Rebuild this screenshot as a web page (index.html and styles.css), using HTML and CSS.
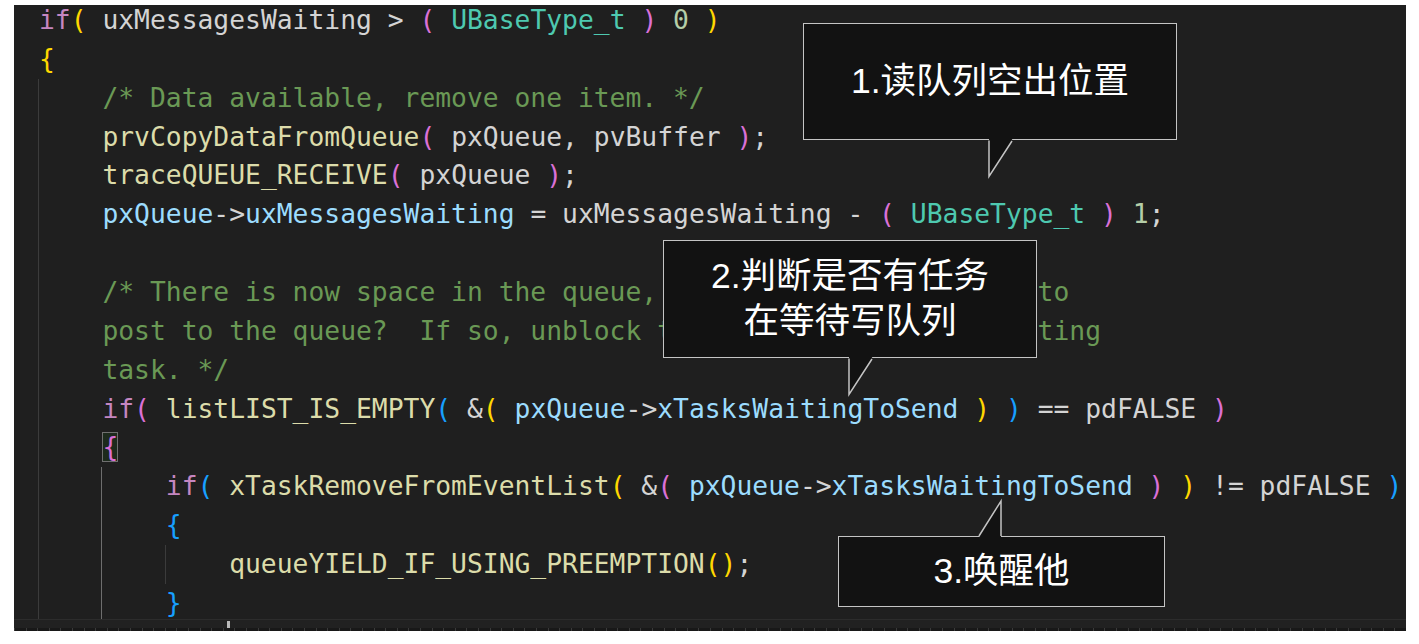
FILE: index.html
```html
<!DOCTYPE html>
<html lang="zh-CN">
<head>
<meta charset="utf-8">
<title>queue receive</title>
<link rel="stylesheet" href="styles.css">
</head>
<body>
<div class="stage">
  <div class="editor">
    <div class="code">
      <div class="lines">
        <div class="ln"><span class="k">if</span><span class="b1">(</span> uxMessagesWaiting &gt; <span class="b2">(</span> <span class="t">UBaseType_t</span> <span class="b2">)</span> <span class="n">0</span> <span class="b1">)</span></div>
        <div class="ln"><span class="b1">{</span></div>
        <div class="ln"><span class="ind"></span><span class="c">/* Data available, remove one item. */</span></div>
        <div class="ln"><span class="ind"></span><span class="f">prvCopyDataFromQueue</span><span class="b2">(</span> pxQueue, pvBuffer <span class="b2">)</span>;</div>
        <div class="ln"><span class="ind"></span><span class="f">traceQUEUE_RECEIVE</span><span class="b2">(</span> pxQueue <span class="b2">)</span>;</div>
        <div class="ln"><span class="ind"></span><span class="v">pxQueue</span>-&gt;<span class="v">uxMessagesWaiting</span> = uxMessagesWaiting - <span class="b2">(</span> <span class="t">UBaseType_t</span> <span class="b2">)</span> <span class="n">1</span>;</div>
        <div class="ln"><span class="ind"></span></div>
        <div class="ln"><span class="ind"></span><span class="c">/* There is now space in the queue, were any tasks waiting to</span></div>
        <div class="ln"><span class="ind"></span><span class="c">post to the queue?  If so, unblock the highest priority waiting</span></div>
        <div class="ln"><span class="ind"></span><span class="c">task. */</span></div>
        <div class="ln"><span class="ind"></span><span class="k">if</span><span class="b2">(</span> <span class="f">listLIST_IS_EMPTY</span><span class="b3">(</span> &amp;<span class="b1">(</span> <span class="v">pxQueue</span>-&gt;<span class="v">xTasksWaitingToSend</span> <span class="b1">)</span> <span class="b3">)</span> == pdFALSE <span class="b2">)</span></div>
        <div class="ln"><span class="ind"></span><span class="b2 match">{</span></div>
        <div class="ln"><span class="ind"></span><span class="ind active"></span><span class="k">if</span><span class="b3">(</span> <span class="f">xTaskRemoveFromEventList</span><span class="b1">(</span> &amp;<span class="b2">(</span> <span class="v">pxQueue</span>-&gt;<span class="v">xTasksWaitingToSend</span> <span class="b2">)</span> <span class="b1">)</span> != pdFALSE <span class="b3">)</span></div>
        <div class="ln"><span class="ind"></span><span class="ind active"></span><span class="b3">{</span></div>
        <div class="ln"><span class="ind"></span><span class="ind active"></span><span class="ind"></span><span class="f">queueYIELD_IF_USING_PREEMPTION</span><span class="b1">()</span>;</div>
        <div class="ln"><span class="ind"></span><span class="ind active"></span><span class="b3">}</span></div>
        <div class="ln"><span class="ind"></span><span class="ind active"></span></div>
      </div>
    </div>
    <div class="hscroll"><span class="caret"></span></div>
    <div class="ruler"></div>
  </div>

  <div class="callout co1">
    <div class="co-text">1.读队列空出位置</div>
    <svg class="tail tail-down" width="32" height="42" viewBox="0 0 32 42"><polygon points="5,0 5,38.5 29,0" fill="#121212"/><polyline points="5,2.5 5,38.5 28,3" fill="none" stroke="#c4c4c4" stroke-width="1.5"/></svg>
  </div>
  <div class="callout co2">
    <div class="co-text">2.判断是否有任务<br>在等待写队列</div>
    <svg class="tail tail-down" width="32" height="42" viewBox="0 0 32 42"><polygon points="5,0 5,38.5 29,0" fill="#121212"/><polyline points="5,2.5 5,38.5 28,3" fill="none" stroke="#c4c4c4" stroke-width="1.5"/></svg>
  </div>
  <div class="callout co3">
    <div class="co-text">3.唤醒他</div>
    <svg class="tail tail-up" width="32" height="40" viewBox="0 0 32 40"><polygon points="3,40 26,2 26,40" fill="#121212"/><polyline points="4,37 26,2 26,37" fill="none" stroke="#c4c4c4" stroke-width="1.5"/></svg>
  </div>
</div>
</body>
</html>
```
FILE: styles.css
```css
html, body {
  margin: 0;
  padding: 0;
  background: #ffffff;
}

.stage {
  position: relative;
  width: 1419px;
  height: 644px;
  overflow: hidden;
}

.editor {
  margin: 5px 0 0 14px;
  width: 1392px;
  height: 626px;
  background: #1f1f1f;
  display: flex;
  flex-direction: column;
}

.code {
  flex: 1;
  overflow: hidden;
  padding-left: 25px;
}

.lines {
  margin-top: -4px;
  font-family: "DejaVu Sans Mono", "Liberation Mono", monospace;
  font-size: 26.33px;
  line-height: 38.87px;
  color: #d4d4d4;
}

.ln {
  height: 38.87px;
  white-space: pre;
}

.ind {
  display: inline-block;
  width: 4ch;
  height: 38.87px;
  vertical-align: top;
  box-sizing: border-box;
  border-left: 1px solid #3b3b3b;
  margin-left: -1px;
  margin-right: 1px;
}
.ind.active { border-left-color: #6e6e6e; }

.k { color: #c586c0; }
.f { color: #dcdcaa; }
.v { color: #9cdcfe; }
.t { color: #4ec9b0; }
.n { color: #b5cea8; }
.c { color: #6a9955; }
.b1 { color: #ffd700; }
.b2 { color: #da70d6; }
.b3 { color: #179fff; }

.match {
  outline: 1px solid #6f6f6f;
  outline-offset: -1px;
  background: #1d2a1d;
}

.hscroll {
  height: 8px;
  border-top: 1px solid #2c2c2c;
  background: #212121;
  position: relative;
}
.caret {
  position: absolute;
  left: 213px;
  top: 1px;
  width: 3px;
  height: 7px;
  background: #b8b8b8;
}
.ruler {
  height: 3px;
  background:
    repeating-linear-gradient(90deg, #3a3a3a 0 1px, transparent 1px 11.6px),
    #181818;
}

.callout {
  position: absolute;
  box-sizing: border-box;
  background: #121212;
  border: 1.5px solid #c4c4c4;
  display: flex;
  align-items: center;
  justify-content: center;
}
.co-text {
  font-family: "Liberation Sans", "Noto Sans CJK SC", sans-serif;
  font-size: 35.5px;
  line-height: 45px;
  color: #ffffff;
  text-align: center;
}
.co1 { left: 803px; top: 23px; width: 374px; height: 117px; }
.co2 { left: 663px; top: 240px; width: 374px; height: 118px; }
.co3 { left: 838px; top: 536px; width: 327px; height: 71px; }

.tail {
  position: absolute;
  overflow: visible;
}
.tail-down { left: 180px; top: calc(100% - 1.5px); }
.tail-up { left: 136px; bottom: calc(100% - 1.5px); }
```
